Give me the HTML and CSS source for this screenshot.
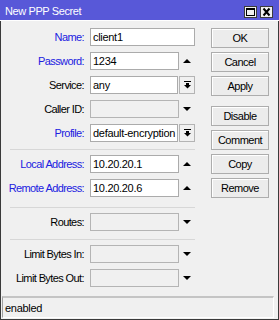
FILE: index.html
```html
<!DOCTYPE html>
<html>
<head>
<meta charset="utf-8">
<link rel="stylesheet" href="styles.css">
</head>
<body>
<div class="window">
  <div class="titlebar">
    <span class="title">New PPP Secret</span>
    <div class="tb-btns">
      <span class="tb-btn"><svg width="11" height="10" viewBox="0 0 11 10"><rect x="1.5" y="1.5" width="8" height="7" fill="none" stroke="#000" stroke-width="1"/><rect x="1" y="1" width="9" height="2" fill="#000"/></svg></span>
      <span class="tb-btn"><svg width="11" height="10" viewBox="0 0 11 10"><path d="M2.5 1.5 L8.5 8.5 M8.5 1.5 L2.5 8.5" stroke="#000" stroke-width="2"/></svg></span>
    </div>
  </div>
  <div class="body">
    <div class="main">
      <div class="form">
        <div class="row">
          <span class="lbl blue">Name:</span>
          <span class="field full">client1</span>
        </div>
        <div class="row">
          <span class="lbl blue">Password:</span>
          <span class="field mid">1234</span>
          <span class="arrow"><svg width="8" height="4" viewBox="0 0 8 4"><polygon points="0,4 8,4 4,0" fill="#000"/></svg></span>
        </div>
        <div class="row">
          <span class="lbl">Service:</span>
          <span class="field short">any</span>
          <span class="ddbtn"><svg width="7" height="8" viewBox="0 0 7 8"><rect x="0" y="0" width="7" height="1" fill="#000"/><rect x="2" y="2" width="3" height="2" fill="#000"/><polygon points="0,4 7,4 3.5,7.5" fill="#000"/></svg></span>
        </div>
        <div class="row">
          <span class="lbl">Caller ID:</span>
          <span class="field mid off"></span>
          <span class="arrow"><svg width="8" height="4" viewBox="0 0 8 4"><polygon points="0,0 8,0 4,4" fill="#000"/></svg></span>
        </div>
        <div class="row">
          <span class="lbl blue">Profile:</span>
          <span class="field short">default-encryption</span>
          <span class="ddbtn"><svg width="7" height="8" viewBox="0 0 7 8"><rect x="0" y="0" width="7" height="1" fill="#000"/><rect x="2" y="2" width="3" height="2" fill="#000"/><polygon points="0,4 7,4 3.5,7.5" fill="#000"/></svg></span>
        </div>
        <div class="sep sep1"></div>
        <div class="row">
          <span class="lbl blue">Local Address:</span>
          <span class="field mid">10.20.20.1</span>
          <span class="arrow"><svg width="8" height="4" viewBox="0 0 8 4"><polygon points="0,4 8,4 4,0" fill="#000"/></svg></span>
        </div>
        <div class="row">
          <span class="lbl blue">Remote Address:</span>
          <span class="field mid">10.20.20.6</span>
          <span class="arrow"><svg width="8" height="4" viewBox="0 0 8 4"><polygon points="0,4 8,4 4,0" fill="#000"/></svg></span>
        </div>
        <div class="sep sep2"></div>
        <div class="row">
          <span class="lbl">Routes:</span>
          <span class="field mid off"></span>
          <span class="arrow"><svg width="8" height="4" viewBox="0 0 8 4"><polygon points="0,0 8,0 4,4" fill="#000"/></svg></span>
        </div>
        <div class="sep sep3"></div>
        <div class="row">
          <span class="lbl">Limit Bytes In:</span>
          <span class="field mid off"></span>
          <span class="arrow"><svg width="8" height="4" viewBox="0 0 8 4"><polygon points="0,0 8,0 4,4" fill="#000"/></svg></span>
        </div>
        <div class="row">
          <span class="lbl">Limit Bytes Out:</span>
          <span class="field mid off"></span>
          <span class="arrow"><svg width="8" height="4" viewBox="0 0 8 4"><polygon points="0,0 8,0 4,4" fill="#000"/></svg></span>
        </div>
      </div>
      <div class="buttons">
        <span class="btn">OK</span>
        <span class="btn">Cancel</span>
        <span class="btn">Apply</span>
        <span class="btn gap">Disable</span>
        <span class="btn">Comment</span>
        <span class="btn">Copy</span>
        <span class="btn">Remove</span>
      </div>
    </div>
    <div class="status">enabled</div>
  </div>
</div>
</body>
</html>
```
FILE: styles.css
```css
html, body {
  margin: 0;
  padding: 0;
  background: #f0f0f0;
}
.window {
  width: 279px;
  height: 320px;
  display: flex;
  flex-direction: column;
  font-family: "Liberation Sans", Arial, sans-serif;
  font-size: 11px;
  color: #000;
}
.titlebar {
  height: 20px;
  background: #5858d8;
  border-bottom: 1px solid #ffffff;
  display: flex;
  align-items: center;
  justify-content: space-between;
  padding: 0 6px 0 5px;
  flex: none;
}
.title {
  color: #fff;
  font-size: 11px;
  letter-spacing: -0.4px;
  padding-top: 1px;
}
.tb-btns {
  display: flex;
  gap: 3px;
  padding-top: 4px;
}
.tb-btn {
  width: 13px;
  height: 12px;
  box-sizing: border-box;
  border: 1px solid #3c3c3c;
  background: #f0f0f0;
  display: flex;
  align-items: center;
  justify-content: center;
}
.tb-btn svg { display: block; }
.body {
  flex: 1;
  display: flex;
  flex-direction: column;
  border: 1px solid #3a3a3a;
  border-top: none;
}
.main {
  flex: 1;
  display: flex;
  padding-top: 7px;
}
.form {
  width: 194px;
  display: flex;
  flex-direction: column;
}
.row {
  display: flex;
  align-items: center;
  height: 18px;
  margin-bottom: 6px;
}
.lbl {
  width: 83px;
  margin-right: 6px;
  text-align: right;
  letter-spacing: -0.6px;
  white-space: nowrap;
  flex: none;
}
.blue { color: #2020e0; }
.field {
  height: 18px;
  box-sizing: border-box;
  border: 1px solid #ababab;
  background: #fff;
  padding-left: 2px;
  line-height: 16px;
  white-space: nowrap;
  overflow: hidden;
  letter-spacing: -0.3px;
  flex: none;
}
.field.full { width: 105px; }
.field.mid { width: 89px; }
.field.short { width: 88px; margin-right: 1px; }
.field.off {
  background: #f0f0f0;
  border-color: #b4b4b4;
}
.arrow {
  width: 16px;
  height: 18px;
  display: flex;
  align-items: center;
  justify-content: center;
}
.arrow svg, .ddbtn svg { display: block; }
.ddbtn {
  width: 16px;
  height: 18px;
  box-sizing: border-box;
  border: 1px solid #b4b4b4;
  background: #f0f0f0;
  display: flex;
  align-items: center;
  justify-content: center;
}
.sep {
  height: 1px;
  background: #d7d7d7;
  margin-left: 9px;
  margin-bottom: 5px;
}
.sep1 { margin-top: 1px; }
.sep2 { margin-top: 4px; }
.sep3 { margin-top: 2px; }
.buttons {
  margin-left: 16px;
  width: 58px;
  display: flex;
  flex-direction: column;
  gap: 4px;
}
.btn {
  height: 20px;
  box-sizing: border-box;
  border: 1px solid #adadad;
  background: #ececec;
  box-shadow: inset 1px 1px 0 #fff;
  display: flex;
  align-items: center;
  justify-content: center;
  letter-spacing: -0.5px;
}
.btn.gap { margin-top: 6px; }
.status {
  height: 22px;
  box-sizing: border-box;
  margin: 0 4px 1px 1px;
  border-top: 2px solid #c4c4c4;
  border-left: 1px solid #a0a0a0;
  border-right: 1px solid #ffffff;
  border-bottom: 1px solid #ffffff;
  padding-left: 2px;
  display: flex;
  align-items: center;
  letter-spacing: -0.3px;
}
```
